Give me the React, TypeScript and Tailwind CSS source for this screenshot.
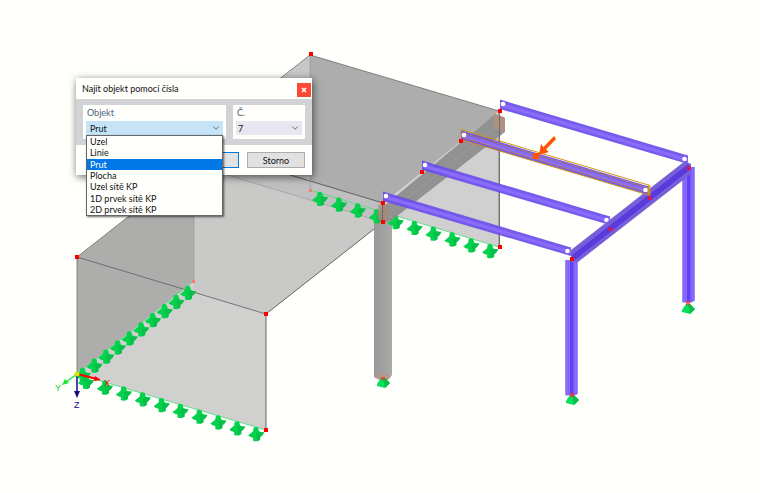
import { useState } from 'react';
import { ChevronDown } from 'lucide-react';
import clsx from 'clsx';

const objectTypes = [
  'Uzel',
  'Linie',
  'Prut',
  'Plocha',
  'Uzel sítě KP',
  '1D prvek sítě KP',
  '2D prvek sítě KP',
];

const range = Array.from({ length: 10 }, (_, i) => i);

const nodes = [
  [310, 54],
  [499, 111],
  [499, 247],
  [460, 141],
  [421, 172],
  [382, 203],
  [382, 222],
  [76, 257],
  [265, 314],
  [265, 430],
  [571, 259],
];

const frameNodes = [
  [688, 168],
  [649, 198],
  [610, 229],
];

function LineSupport({ x, y }: { x: number; y: number }) {
  return (
    <g transform={`translate(${x} ${y})`}>
      <path
        d="M-2.5-6.5Q0-8 2-6.5L3-3Q5-1.5 8-2Q7 1 4 3L4 5.5Q1 8-3 6.5L-3 3.5Q-6 3-8 1Q-5-1-3-3Z"
        fill="#05d24c"
      />
      <path d="M0-2L8-2Q7 1 4 3L4 5.5L1 7Z" fill="#06c04a" />
    </g>
  );
}

function NodeSupport({ x, y }: { x: number; y: number }) {
  return (
    <g transform={`translate(${x} ${y})`}>
      <path d="M-2-5L2-5L7 0L2 5L-6 3L-6 1Z" fill="#08df5d" />
      <path d="M0-4L2-5L7 0L2 5L1 0Z" fill="#08bd4a" />
    </g>
  );
}

function Beam({ x, y, selected }: { x: number; y: number; selected?: boolean }) {
  return (
    <g transform={`translate(${x} ${y})`}>
      <path d="M0 0L188 56V64.5L0 9.5Z" fill="#6c50ea" fillOpacity="0.93" />
      <path d="M1 3.2L188 59V62.2L1 7Z" fill="#8a6bfb" />
      {selected && (
        <g fill="none" stroke="#cf9418">
          <path d="M0-1L189 55V65L0 9Z" />
          <path d="M2 2.5L186 57M2 7L186 61.5" strokeWidth="0.7" strokeOpacity="0.8" />
          <path d="M187.5 55V64" strokeWidth="2" />
        </g>
      )}
      <circle cx="3" cy="4.5" r="2.3" fill="#fff" />
      <circle cx="184.5" cy="59.5" r="2.3" fill="#fff" />
    </g>
  );
}

function Column({ x, y }: { x: number; y: number }) {
  return (
    <g transform={`translate(${x} ${y})`}>
      <path d="M-6 0H6V134L3 135.5H-6Z" fill="#8a6dfb" />
      <path d="M-5.5 0V135M-3 0V135M3 0V135M5.5 0V134" stroke="#7f62f6" />
      <path d="M-1.5 0H2V135H-1.5Z" fill="#6140f5" />
    </g>
  );
}

function Model() {
  return (
    <svg viewBox="0 0 760 493" className="block w-full h-auto" role="img" aria-label="Model">
      <defs>
        <linearGradient id="column" x1="0" x2="1">
          <stop offset="0" stopColor="#999" />
          <stop offset="0.5" stopColor="#a1a1a1" />
          <stop offset="1" stopColor="#aaa" />
        </linearGradient>
      </defs>

      {/* slabs and walls */}
      <path d="M310 190V55L499 111V247Z" fill="#d0d0d0" />
      <path d="M194 146L310 55V190L194 222Z" fill="#c8c8c8" />
      <path d="M310 55L499 111L383 203L310 181Z" fill="#adadad" />
      <path d="M194 146L383 203V222L194 165Z" fill="#c0c0c0" />
      <path d="M194 165L383 222L266 314L194 292Z" fill="#c9c9c8" />
      <path d="M77 257L194 165V281L77 374Z" fill="#adadac" />
      <path d="M194 281V292L266 314V430L77 374Z" fill="#d0d0cf" />

      <g fill="none" stroke="#777" strokeWidth="0.9">
        <path d="M194 146L310 55L499 111V247" />
        <path d="M194 146L383 203V222L266 314V430" stroke="#555" />
        <path d="M77 374V257L194 165" />
        <path d="M77 257L266 314" stroke="#666" />
        <path d="M194 165L383 222M194 165V281M310 55V190" stroke="#999" strokeWidth="0.7" />
      </g>
      <path
        d="M310 190L499 247M194 281L77 374L266 430"
        fill="none"
        stroke="#52dc83"
        strokeWidth="0.9"
      />

      {/* concrete column, drawn under the wall supports */}
      <path d="M374 218H392V375L389 379L380 380L374 377Z" fill="url(#column)" />
      <path d="M374 377L382 373L391 376L388 380H380Z" fill="#b4998f" />

      {/* supports along the wall edges */}
      {range.map((i) => (
        <g key={i}>
          <LineSupport x={188 - i * 11.7} y={293 + i * 9.1} />
          <LineSupport x={320 + i * 18.9} y={199 + i * 5.8} />
          <LineSupport x={86 + i * 18.9} y={382 + i * 5.8} />
        </g>
      ))}

      {/* girder */}
      <path
        d="M384 206L495 114L505 118V132L392 220L382 223L377 214Z"
        fill="#8b8b8b"
        fillOpacity="0.9"
      />
      <path d="M386 215L500 124" stroke="#9b9b9b" />
      <path d="M378 205L384 203L389 209V220L383 224L378 219Z" fill="#a88878" fillOpacity="0.7" />
      <path d="M494 114L504 117Q505 118 505 120V132L494 128Z" fill="#b19084" />
      <path d="M382.5 203V222M499.5 111V247" stroke="#666" strokeWidth="0.9" />
      <NodeSupport x={383} y={383} />

      {/* steel frame */}
      <NodeSupport x={572} y={400} />
      <NodeSupport x={688} y={309} />
      <Column x={571.5} y={260} />
      <Column x={688.5} y={167} />
      <Beam x={500} y={99.5} />
      <Beam x={422} y={160.5} />
      <Beam x={383} y={191.5} />
      <path d="M571 250L685 161L691 164V174L578 262L571 262Z" fill="#7a63d8" />
      <path d="M572 255L688 164L691 169L575 260Z" fill="#5a3add" />
      <path d="M572 252.5L686 163M577 260.5L691 172" stroke="#6f55e0" />
      <Beam x={461} y={130.5} selected />

      <path
        d="M381 377h4v3h-4zM570 393h4v4h-4zM686 301h4v4h-4z"
        fill="#f03818"
        fillOpacity="0.7"
      />
      {nodes.map(([x, y]) => (
        <rect key={`${x}-${y}`} x={x - 1} y={y - 2} width="4" height="4" fill="#f00" />
      ))}
      {frameNodes.map(([x, y]) => (
        <rect key={`${x}-${y}`} x={x - 1} y={y - 1.5} width="3.5" height="3.5" fill="#eb1238" />
      ))}
      <path d="M192 280h3v3h-3zM309 189h3v3h-3z" fill="#f77d6c" />

      {/* pointer to the found member */}
      <path d="M533 153h6v6h-6z" fill="#ff5500" />
      <path d="M539 155L541 144L543.5 147L554 136L556 139L546 149.5L549 152Z" fill="#ff5500" />

      {/* coordinate axes */}
      <path d="M77 374L97 379" stroke="#f00" strokeWidth="2" />
      <path d="M95 376L101 380L94 381Z" fill="#f00" />
      <path d="M77 374L66 382" stroke="#18e834" strokeWidth="1.5" />
      <path d="M62 385L65 379L69 383Z" fill="#18e834" />
      <path d="M77 375V392" stroke="#110a88" strokeWidth="1.5" />
      <path d="M74 391H80L77 398Z" fill="#110a88" />
      <circle cx="77" cy="374" r="2.5" fill="#cfe800" />
      <g className="font-['Liberation_Sans',sans-serif] text-[9px]">
        <text x="104" y="386" fill="#f00">X</text>
        <text x="55" y="391" fill="#12cf32">Y</text>
        <text x="74" y="408" fill="#110a88">Z</text>
      </g>
    </svg>
  );
}

export default function App() {
  const [type, setType] = useState('Prut');

  return (
    <main className="relative min-h-screen bg-[#fffffc] font-['Lato',sans-serif] text-[9px] leading-[11px] text-[#111]">
      <Model />

      <section
        role="dialog"
        aria-labelledby="title"
        className="absolute left-[76px] top-[78px] w-[236px] bg-[#fffffc] shadow-[1px_2px_8px_rgba(0,0,0,0.6)]"
      >
        <header className="flex h-[21px] items-center justify-between pl-1.5 pr-px">
          <h1 id="title">Najít objekt pomocí čísla</h1>
          <button
            type="button"
            aria-label="Zavřít"
            className="mt-0.5 flex h-[14px] w-[14px] items-center justify-center bg-[#fb4934]"
          >
            <svg viewBox="0 0 6 6" className="h-1.5 w-1.5" stroke="#fff" strokeWidth="1.5">
              <path d="M1 1L5 5M5 1L1 5" />
            </svg>
          </button>
        </header>

        <div className="flex gap-[7px] bg-[#d2d3d7] px-[7px] py-1.5">
          <div className="flex-1 bg-[#fffffc] px-[3px] pb-1">
            <label htmlFor="type" className="block h-4 pt-0.5 pl-px text-[#49617f]">
              Objekt
            </label>
            <div className="relative">
              <select
                id="type"
                value={type}
                onChange={(e) => setType(e.target.value)}
                className="block h-[14px] w-full appearance-none bg-[#c5e4f8] pl-1"
              >
                {objectTypes.map((item) => (
                  <option key={item}>{item}</option>
                ))}
              </select>
              <ChevronDown className="pointer-events-none absolute right-0.5 top-0.5 h-2.5 w-2.5 text-[#555]" />
              <div
                role="listbox"
                aria-label="Objekt"
                className="absolute inset-x-0 top-full z-10 flex h-[81px] flex-col border border-[#666] bg-[#fffffc] shadow-[1px_1px_2px_rgba(0,0,0,0.6)]"
              >
                {objectTypes.map((item) => (
                  <button
                    key={item}
                    type="button"
                    role="option"
                    aria-selected={item === type}
                    onClick={() => setType(item)}
                    className={clsx(
                      'flex flex-1 items-center pl-[3px] text-left',
                      item === type && 'bg-[#0078e8] text-white',
                    )}
                  >
                    {item}
                  </button>
                ))}
              </div>
            </div>
          </div>

          <div className="w-[72px] bg-[#fffffc] px-[3px] pb-1">
            <label htmlFor="number" className="block h-4 pt-0.5 pl-px text-[#49617f]">
              Č.
            </label>
            <div className="relative">
              <select
                id="number"
                defaultValue="7"
                className="block h-[14px] w-full appearance-none bg-[#e8e6f0] pl-0.5"
              >
                <option>7</option>
              </select>
              <ChevronDown className="pointer-events-none absolute right-0.5 top-0.5 h-2.5 w-2.5 text-[#555]" />
            </div>
          </div>
        </div>

        <footer className="flex justify-end gap-2 px-[7px] py-[7px]">
          <button type="button" className="h-4 w-[58px] border border-[#0078d7] bg-[#e1e1e1]">
            OK
          </button>
          <button type="button" className="h-4 w-[58px] border border-[#adadad] bg-[#e1e1e1]">
            Storno
          </button>
        </footer>
      </section>
    </main>
  );
}
